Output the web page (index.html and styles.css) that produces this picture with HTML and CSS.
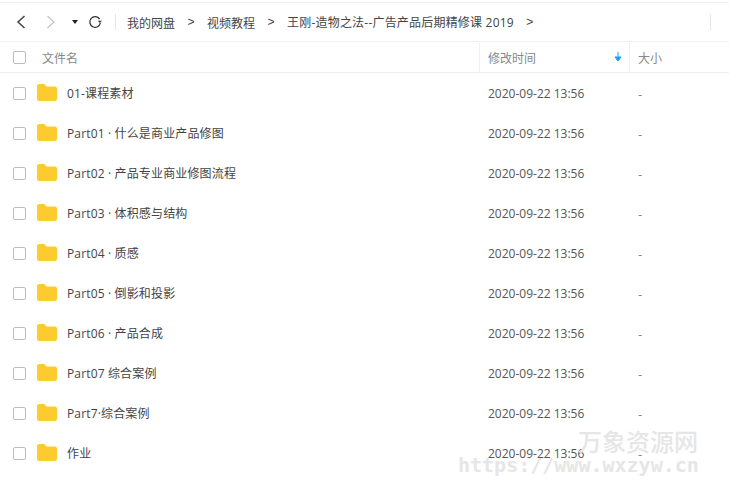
FILE: index.html
```html
<!DOCTYPE html>
<html lang="zh">
<head>
<meta charset="utf-8">
<title>我的网盘</title>
<link rel="stylesheet" href="styles.css">
</head>
<body>
<div class="page">
  <div class="topline"></div>
  <nav class="toolbar">
    <svg class="ic back" width="12" height="16" viewBox="0 0 12 16"><path d="M9.500 2 3 8l6.500 6" fill="none" stroke="#444" stroke-width="1.500"/></svg>
    <svg class="ic fwd" width="12" height="16" viewBox="0 0 12 16"><path d="M2.500 2 9 8l-6.500 6" fill="none" stroke="#c4c4c4" stroke-width="1.200"/></svg>
    <span class="caret"></span>
    <svg class="ic refresh" width="14" height="14" viewBox="0 0 14 14"><path d="M11.600 4.200A5.300 5.300 0 1 0 12.300 8" fill="none" stroke="#333" stroke-width="1.300"/><path d="M9.800 5.800h4.200l-2.100 2.300z" fill="#333"/></svg>
    <span class="divider"></span>
    <div class="crumbs">
      <span>我的网盘</span><span class="sep">&gt;</span>
      <span>视频教程</span><span class="sep">&gt;</span>
      <span class="crumb-long">王刚-造物之法--广告产品后期精修课 2019</span><span class="sep">&gt;</span>
    </div>
    <span class="divider end"></span>
  </nav>
  <header class="row head">
    <span class="check"></span>
    <span class="name-h">文件名</span>
    <span class="time-h">修改时间<svg width="8" height="10" viewBox="0 0 8 10"><path d="M4 0v8M1 5l3 4 3-4z" fill="#1e9df2" stroke="#1e9df2" stroke-width="1"/></svg></span>
    <span class="size-h">大小</span>
  </header>
  <main class="list">
    <div class="row item"><span class="check"></span><svg class="folder" viewBox="0 0 20 17"><path d="M0 2a2 2 0 0 1 2-2h4.500c1 0 1.500.5 2 1.200L9.500 2.500H18a2 2 0 0 1 2 2V15a2 2 0 0 1-2 2H2a2 2 0 0 1-2-2z"/></svg><span class="name">01-课程素材</span><span class="time">2020-09-22 13:56</span><span class="size">-</span></div>
    <div class="row item"><span class="check"></span><svg class="folder" viewBox="0 0 20 17"><path d="M0 2a2 2 0 0 1 2-2h4.500c1 0 1.500.5 2 1.200L9.500 2.500H18a2 2 0 0 1 2 2V15a2 2 0 0 1-2 2H2a2 2 0 0 1-2-2z"/></svg><span class="name">Part01 · 什么是商业产品修图</span><span class="time">2020-09-22 13:56</span><span class="size">-</span></div>
    <div class="row item"><span class="check"></span><svg class="folder" viewBox="0 0 20 17"><path d="M0 2a2 2 0 0 1 2-2h4.500c1 0 1.500.5 2 1.200L9.500 2.500H18a2 2 0 0 1 2 2V15a2 2 0 0 1-2 2H2a2 2 0 0 1-2-2z"/></svg><span class="name">Part02 · 产品专业商业修图流程</span><span class="time">2020-09-22 13:56</span><span class="size">-</span></div>
    <div class="row item"><span class="check"></span><svg class="folder" viewBox="0 0 20 17"><path d="M0 2a2 2 0 0 1 2-2h4.500c1 0 1.500.5 2 1.200L9.500 2.500H18a2 2 0 0 1 2 2V15a2 2 0 0 1-2 2H2a2 2 0 0 1-2-2z"/></svg><span class="name">Part03 · 体积感与结构</span><span class="time">2020-09-22 13:56</span><span class="size">-</span></div>
    <div class="row item"><span class="check"></span><svg class="folder" viewBox="0 0 20 17"><path d="M0 2a2 2 0 0 1 2-2h4.500c1 0 1.500.5 2 1.200L9.500 2.500H18a2 2 0 0 1 2 2V15a2 2 0 0 1-2 2H2a2 2 0 0 1-2-2z"/></svg><span class="name">Part04 · 质感</span><span class="time">2020-09-22 13:56</span><span class="size">-</span></div>
    <div class="row item"><span class="check"></span><svg class="folder" viewBox="0 0 20 17"><path d="M0 2a2 2 0 0 1 2-2h4.500c1 0 1.500.5 2 1.200L9.500 2.500H18a2 2 0 0 1 2 2V15a2 2 0 0 1-2 2H2a2 2 0 0 1-2-2z"/></svg><span class="name">Part05 · 倒影和投影</span><span class="time">2020-09-22 13:56</span><span class="size">-</span></div>
    <div class="row item"><span class="check"></span><svg class="folder" viewBox="0 0 20 17"><path d="M0 2a2 2 0 0 1 2-2h4.500c1 0 1.500.5 2 1.200L9.500 2.500H18a2 2 0 0 1 2 2V15a2 2 0 0 1-2 2H2a2 2 0 0 1-2-2z"/></svg><span class="name">Part06 · 产品合成</span><span class="time">2020-09-22 13:56</span><span class="size">-</span></div>
    <div class="row item"><span class="check"></span><svg class="folder" viewBox="0 0 20 17"><path d="M0 2a2 2 0 0 1 2-2h4.500c1 0 1.500.5 2 1.200L9.500 2.500H18a2 2 0 0 1 2 2V15a2 2 0 0 1-2 2H2a2 2 0 0 1-2-2z"/></svg><span class="name">Part07 综合案例</span><span class="time">2020-09-22 13:56</span><span class="size">-</span></div>
    <div class="row item"><span class="check"></span><svg class="folder" viewBox="0 0 20 17"><path d="M0 2a2 2 0 0 1 2-2h4.500c1 0 1.500.5 2 1.200L9.500 2.500H18a2 2 0 0 1 2 2V15a2 2 0 0 1-2 2H2a2 2 0 0 1-2-2z"/></svg><span class="name">Part7·综合案例</span><span class="time">2020-09-22 13:56</span><span class="size">-</span></div>
    <div class="row item"><span class="check"></span><svg class="folder" viewBox="0 0 20 17"><path d="M0 2a2 2 0 0 1 2-2h4.500c1 0 1.500.5 2 1.200L9.500 2.500H18a2 2 0 0 1 2 2V15a2 2 0 0 1-2 2H2a2 2 0 0 1-2-2z"/></svg><span class="name">作业</span><span class="time">2020-09-22 13:56</span><span class="size">-</span></div>
  </main>
  <div class="watermark">
    <div class="wm-cn">万象资源网</div>
    <div class="wm-url">https://www.wxzyw.cn</div>
  </div>
</div>
</body>
</html>
```
FILE: styles.css
```css
* { box-sizing: border-box; }
html, body { margin: 0; padding: 0; background: #fff; }
body { font-family: "Noto Sans CJK SC", "Open Sans", sans-serif; overflow: hidden; }
.page { position: relative; width: 729px; height: 500px; overflow: hidden; }
.topline { height: 3px; border-bottom: 1px solid #f1f1f1; }
.toolbar { height: 39px; display: flex; align-items: center; border-bottom: 1px solid #f0f0f0; font-size: 12px; color: #444; }
.ic { flex: none; display: block; }
.back { margin-left: 15px; }
.fwd { margin-left: 18px; }
.caret { flex: none; margin-left: 15px; width: 0; height: 0; border-left: 3px solid transparent; border-right: 3px solid transparent; border-top: 4px solid #222; }
.refresh { margin-left: 10px; }
.divider { flex: none; width: 1px; height: 16px; background: #e6e6e6; margin-left: 13px; }
.crumbs { display: flex; align-items: center; margin-left: 11px; white-space: nowrap; flex: none; width: 583px; }
.sep { margin: 0 12.500px; font-family: "Liberation Sans", sans-serif; }
.crumb-long { font-family: "Open Sans", "Noto Sans CJK SC", sans-serif; letter-spacing: .2px; }
.end { margin-left: 0; }
.row { display: flex; align-items: center; }
.head { height: 31px; border-bottom: 1px solid #f0f0f0; font-size: 12px; color: #888; }
.check { flex: none; width: 13px; height: 13px; margin-left: 13px; border: 1px solid #bdbdbd; border-radius: 2px; background: #fff; }
.name-h { margin-left: 16px; width: 437px; flex: none; }
.time-h { flex: none; width: 150px; height: 29px; border-left: 1px solid #f0f0f0; padding: 0 7px 0 8px; display: flex; align-items: center; justify-content: space-between; }
.size-h { flex: none; height: 29px; border-left: 1px solid #f0f0f0; padding-left: 8px; display: flex; align-items: center; }
.item { height: 40px; font-size: 12px; color: #444; }
.folder { flex: none; width: 20px; height: 17px; margin-left: 11px; margin-bottom: 2px; fill: #fdcb2e; }
.name { flex: none; width: 421px; margin-left: 10px; font-family: "Open Sans", "Noto Sans CJK SC", sans-serif; letter-spacing: .15px; white-space: nowrap; }
.time { flex: none; width: 150px; font-family: "Open Sans", sans-serif; font-size: 12px; color: #555; white-space: nowrap; }
.size { flex: none; color: #777; }
.watermark { position: absolute; left: 459px; top: 428px; width: 240px; color: #e6e6e6; }
.wm-cn { font-size: 24px; line-height: 26px; font-weight: 500; text-align: right; padding-right: 1px; }
.wm-url { font-family: "DejaVu Sans Mono", monospace; font-size: 20px; font-weight: 700; line-height: 24px; white-space: nowrap; margin-top: -1px; margin-left: -1px; }
```
